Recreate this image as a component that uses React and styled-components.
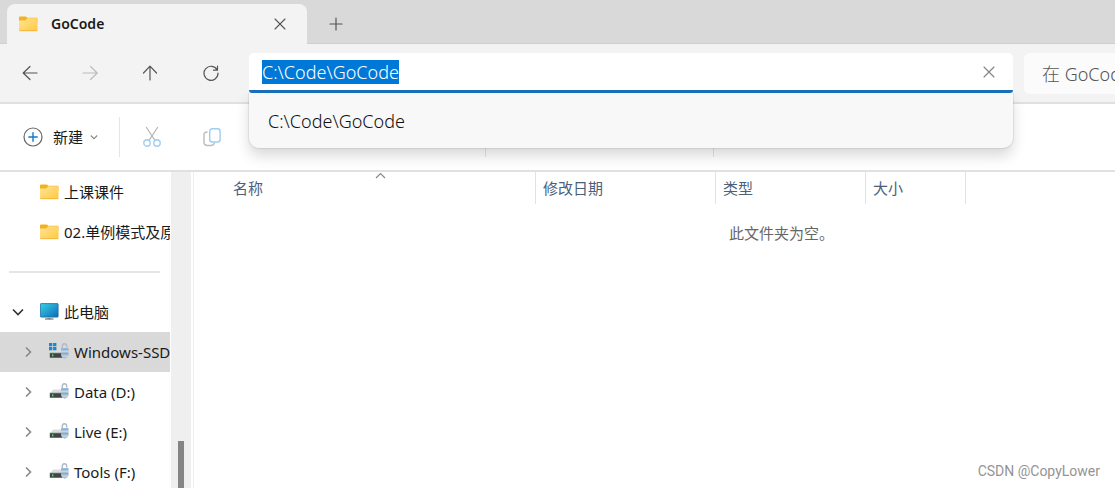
import React, { useEffect, useRef } from "react";
import styled, { createGlobalStyle } from "styled-components";

const uiFont = '"Noto Sans", "Noto Sans CJK SC", sans-serif';

const GlobalStyle = createGlobalStyle`
  *, *::before, *::after { box-sizing: border-box; }
  body {
    margin: 0;
    overflow: hidden;
    background: #fff;
    color: #1a1a1a;
    font-family: ${uiFont};
    font-size: 15px;
    line-height: 20px;
  }
  button, input { font: inherit; color: inherit; }
  button { border: 0; padding: 0; background: none; }
  svg { flex: none; }
`;

const Window = styled.div`
  display: flex;
  flex-direction: column;
  height: 100vh;
`;

const TabStrip = styled.header`
  display: flex;
  flex: none;
  height: 44px;
  padding: 4px 0 0 7px;
  background: #d9d9d9;
  box-shadow: inset 0 -1px #cfcfcf;
`;

const Tab = styled.div`
  display: flex;
  align-items: center;
  width: 300px;
  padding: 0 16px 0 12px;
  border-radius: 8px 8px 0 0;
  background: #f3f3f3;
`;

const TabTitle = styled.span`
  flex: 1;
  margin-left: 13px;
  font-size: 14px;
  font-weight: 600;
`;

const GlyphButton = styled.button`
  display: grid;
  flex: none;
  place-items: center;
  width: ${(p) => p.$width || 22}px;
  height: 32px;
  align-self: center;
  color: ${(p) => p.$color || "#555"};
`;

const NewTabButton = styled(GlyphButton)`
  margin-left: 18px;
`;

const NavBar = styled.div`
  display: flex;
  flex: none;
  align-items: flex-start;
  height: 60px;
  padding-top: 9px;
  border-bottom: 2px solid #e0e0e0;
  background: #f3f3f3;
`;

const NavButtons = styled.nav`
  display: flex;
  flex: none;
  width: 249px;
  height: 40px;
`;

const AddressArea = styled.div`
  position: relative;
  z-index: 2;
  flex: 1;
  min-width: 0;
`;

const AddressBox = styled.div`
  display: flex;
  height: 40px;
  padding: 0 13px;
  border-bottom: 3px solid #1a6fb8;
  border-radius: 5px 5px 3px 3px;
  background: #fff;
`;

const AddressInput = styled.input`
  flex: 1;
  min-width: 0;
  height: 37px;
  padding: 0;
  border: 0;
  outline: 0;
  background: none;
  font-size: 18px;
  font-weight: 300;
  &::selection { background: #0078d7; color: #fff; }
`;

const Suggestions = styled.ul`
  position: absolute;
  top: 40px;
  left: 0;
  right: 0;
  margin: 0;
  padding: 8px 0;
  border-radius: 0 0 10px 10px;
  background: #f8f8f8;
  box-shadow: 0 0 1px 1px #00000014, 0 8px 14px #00000026;
  clip-path: inset(0 -30px -30px -30px);
  list-style: none;
`;

const Suggestion = styled.button`
  display: block;
  width: 100%;
  height: 39px;
  padding-left: 19px;
  text-align: left;
  font-size: 18px;
  font-weight: 300;
  color: #111;
`;

const SearchInput = styled.input`
  flex: none;
  width: 91px;
  height: 41px;
  margin-left: 11px;
  padding: 0 0 0 18px;
  border: 0;
  border-radius: 6px 0 0 6px;
  outline: 0;
  background: #fbfbfb;
  font-size: 18px;
  font-weight: 300;
  &::placeholder { color: #555; opacity: 1; }
`;

const Toolbar = styled.div`
  display: flex;
  flex: none;
  align-items: center;
  height: 68px;
  border-bottom: 2px solid #e0e0e0;
  background: #fff;
`;

const NewButton = styled.button`
  display: flex;
  align-items: center;
  width: 119px;
  height: 40px;
  padding-left: 23px;
  span { margin: 0 7px 0 10px; }
`;

const ToolGroup = styled.div`
  display: flex;
  width: ${(p) => p.$width}px;
  height: 40px;
  padding-left: 2px;
  border-left: 1px solid #e5e5e5;
`;

const Body = styled.div`
  display: flex;
  flex: 1;
  min-height: 0;
`;

const Sidebar = styled.nav`
  flex: none;
  width: 171px;
  overflow: hidden;
`;

const TreeRow = styled.button`
  display: flex;
  align-items: center;
  gap: 5px;
  width: 170px;
  height: 40px;
  padding-left: ${(p) => p.$indent}px;
  overflow: hidden;
  white-space: nowrap;
  text-align: left;
  background: ${(p) => (p.$selected ? "#d9d9d9" : "transparent")};
`;

const Chevron = styled.svg`
  width: 12px;
  height: 12px;
  margin-right: ${(p) => p.$gap}px;
`;

const DividerRow = styled.div`
  display: flex;
  align-items: center;
  height: 40px;
  padding: 0 11px 0 9px;
  &::before { content: ""; flex: 1; height: 2px; background: #e5e5e5; }
`;

const ScrollTrack = styled.div`
  display: flex;
  flex: none;
  align-items: flex-end;
  justify-content: center;
  width: 20px;
  background: #efefef;
`;

const ScrollThumb = styled.div`
  width: 6px;
  height: 15%;
  background: #858585;
`;

const FilePane = styled.main`
  flex: 1;
  min-width: 0;
  margin-left: 2px;
  border-left: 1px solid #efefef;
`;

const FileTable = styled.table`
  border-collapse: separate;
  border-spacing: 0;
  table-layout: fixed;
  width: 772px;
`;

const HeaderCell = styled.th`
  position: relative;
  width: ${(p) => p.$width}px;
  height: 32px;
  padding: 0 0 0 ${(p) => p.$pad || 7}px;
  border-right: 1px solid #e2e2e2;
  font-weight: 400;
  text-align: left;
  color: #4c607a;
`;

const SortMark = styled.svg`
  position: absolute;
  top: 0;
  left: 50%;
  margin-left: 10px;
`;

const EmptyMessage = styled.p`
  margin: 19px 0 0 535px;
  color: #666;
`;

const Watermark = styled.div`
  position: absolute;
  right: 15px;
  bottom: 7px;
  font-family: Roboto, sans-serif;
  font-size: 14px;
  color: #949494;
`;

const Stroke = ({ size = 16, width = 1.2, children }) => (
  <svg width={size} height={size} viewBox={`0 0 ${size} ${size}`} fill="none" stroke="currentColor" strokeWidth={width} strokeLinecap="round" strokeLinejoin="round">
    {children}
  </svg>
);

const FolderIcon = () => (
  <svg width="19" height="16" viewBox="0 0 19 16">
    <defs>
      <linearGradient id="folder" x1="0" y1="0" x2="1" y2="1">
        <stop offset="0" stopColor="#ffe49a" />
        <stop offset="1" stopColor="#ffc93f" />
      </linearGradient>
    </defs>
    <path d="M0 1.500Q0 .5 1 .5h5.300q.7 0 1.200.6L8.400 1.800H17.500q1 0 1 1V7H0z" fill="#f5b21f" />
    <path d="M0 4.500h6.200L8.400 2.300H17.700q.8 0 .8.8V14q0 1-1 1H1q-1 0-1-1z" fill="url(#folder)" />
    <path d="M.3 14.700h17.900" stroke="#eeb03a" strokeWidth=".8" />
  </svg>
);

const ComputerIcon = () => (
  <svg width="19" height="18" viewBox="0 0 19 18">
    <defs>
      <linearGradient id="screen" x1="0" y1="0" x2="1" y2="1">
        <stop offset="0" stopColor="#35d3e6" />
        <stop offset="1" stopColor="#1268b8" />
      </linearGradient>
    </defs>
    <rect x=".4" y=".6" width="17.700" height="13.500" rx=".7" fill="url(#screen)" stroke="#1c6c9e" strokeWidth=".8" />
    <path d="M7.500 14.500h3.500v1.800H7.500z" fill="#9aa3aa" />
    <path d="M5 16h8.500" stroke="#6c7780" strokeWidth="1.200" />
  </svg>
);

const DriveIcon = ({ system }) => (
  <svg width="20" height="18" viewBox="0 0 20 18">
    <path d="M4 6.500h9l2 3.700H1z" fill="#dadddf" />
    <rect x=".8" y="10" width="13" height="4.700" rx=".5" fill="#424545" />
    <path d="M.8 10h13" stroke="#8c9091" strokeWidth=".7" />
    <rect x="3" y="11.400" width="1.400" height="2" fill="#3ee05a" />
    <path d="M13.300 5V3q0-2.200 2.200-2.200t2.200 2.200v1.500" fill="none" stroke="#b3bac3" strokeWidth="1.400" />
    <path d="M12 5.300h7.500v6.200q0 3-3.800 4.300-3.700-1.300-3.700-4.300z" fill="#a9c0d6" />
    <path d="M12 6h7.500M12 10.700h7.500" stroke="#65aee0" strokeWidth="1" />
    <path d="M12 8.300h7.500M13 13.200h5.500" stroke="#d4dde6" strokeWidth=".9" />
    {system && (
      <>
        <path d="M0 0h8v7.700H0z" fill="#d9d9d9" />
        <path d="M0 0h3.300v3.200H0zM4.100 0h3.300v3.200H4.100zM0 4h3.300v3.200H0zM4.100 4h3.300v3.200H4.100z" fill="#1688d4" />
      </>
    )}
  </svg>
);

const CloseGlyph = () => (
  <Stroke size={12} width={1.1}>
    <path d="M1 1L11 11M11 1L1 11" />
  </Stroke>
);

const drives = ["Windows-SSD (C:)", "Data (D:)", "Live (E:)", "Tools (F:)"];

export default function App() {
  const address = useRef(null);
  useEffect(() => {
    address.current.focus();
    address.current.select();
  }, []);

  return (
    <Window>
      <GlobalStyle />
      <TabStrip>
        <Tab>
          <FolderIcon />
          <TabTitle>GoCode</TabTitle>
          <GlyphButton aria-label="关闭标签页"><CloseGlyph /></GlyphButton>
        </Tab>
        <NewTabButton aria-label="新标签页">
          <Stroke size={14}><path d="M7 1v12M1 7h12" /></Stroke>
        </NewTabButton>
      </TabStrip>

      <NavBar>
        <NavButtons>
          <GlyphButton $width={60} aria-label="后退">
            <Stroke><path d="M15 8H1.500M8 1.500L1.200 8L8 14.500" /></Stroke>
          </GlyphButton>
          <GlyphButton $width={60} $color="#bcbcbc" aria-label="前进">
            <Stroke><path d="M1 8H14.500M8.500 1.500L15.200 8L8.500 14.500" /></Stroke>
          </GlyphButton>
          <GlyphButton $width={60} aria-label="向上">
            <Stroke><path d="M8 15V1.500M1.500 8L8 1.200L14.500 8" /></Stroke>
          </GlyphButton>
          <GlyphButton $width={61} aria-label="刷新">
            <Stroke><path d="M14.300 5.200A7 7 0 1 0 15 8M14.500 1.200V5.200H10.500" /></Stroke>
          </GlyphButton>
        </NavButtons>
        <AddressArea>
          <AddressBox>
            <AddressInput ref={address} aria-label="地址" defaultValue="C:\Code\GoCode" spellCheck={false} />
            <GlyphButton $color="#808080" aria-label="清除"><CloseGlyph /></GlyphButton>
          </AddressBox>
          <Suggestions>
            <li><Suggestion>C:\Code\GoCode</Suggestion></li>
          </Suggestions>
        </AddressArea>
        <SearchInput aria-label="搜索" placeholder="在 GoCode 中搜索" />
      </NavBar>

      <Toolbar>
        <NewButton>
          <svg width="20" height="20" viewBox="0 0 20 20" fill="none">
            <circle cx="10" cy="10" r="9" stroke="#666" strokeWidth="1.200" />
            <path d="M10 5.800v8.400M5.800 10h8.400" stroke="#1479cc" strokeWidth="1.400" strokeLinecap="round" />
          </svg>
          <span>新建</span>
          <svg width="8" height="6" viewBox="0 0 8 6" fill="none" stroke="#888" strokeWidth="1.100"><path d="M.8 1.500L4 4.700l3.200-3.200" /></svg>
        </NewButton>
        <ToolGroup $width={366}>
          <GlyphButton $width={60} aria-label="剪切">
            <svg width="18" height="22" viewBox="0 0 18 22" fill="none" strokeWidth="1.200" strokeLinecap="round">
              <path d="M3.500 1.500L12 14.500M14.500 1.500L6 14.500" stroke="#b3b3b3" />
              <circle cx="4" cy="17" r="3.200" stroke="#a0cdee" strokeWidth="1.400" />
              <circle cx="14" cy="17" r="3.200" stroke="#a0cdee" strokeWidth="1.400" />
            </svg>
          </GlyphButton>
          <GlyphButton $width={60} aria-label="复制">
            <svg width="18" height="20" viewBox="0 0 18 20" fill="none" strokeWidth="1.400">
              <path d="M4.500 5Q1 5 1 8v7q0 3.500 3.500 3.500H8q3 0 3.500-2.800" stroke="#bcbcbc" />
              <rect x="6.700" y="1.700" width="10.400" height="13.300" rx="2.500" stroke="#a0cdee" />
            </svg>
          </GlyphButton>
        </ToolGroup>
        <ToolGroup $width={228} />
        <ToolGroup $width={228} />
      </Toolbar>

      <Body>
        <Sidebar>
          <TreeRow $indent={40}><FolderIcon />上课课件</TreeRow>
          <TreeRow $indent={40}><FolderIcon />02.单例模式及原型模式</TreeRow>
          <DividerRow />
          <TreeRow $indent={12}>
            <Chevron $gap={11} viewBox="0 0 12 12" fill="none" stroke="#333" strokeWidth="1.600"><path d="M1 3.500l5 5 5-5" /></Chevron>
            <ComputerIcon />此电脑
          </TreeRow>
          {drives.map((name, i) => (
            <TreeRow key={name} $indent={22} $selected={i === 0}>
              <Chevron $gap={10} viewBox="0 0 12 12" fill="none" stroke="#888" strokeWidth="1.600"><path d="M4 1.500L8.500 6 4 10.500" /></Chevron>
              <DriveIcon system={i === 0} />{name}
            </TreeRow>
          ))}
        </Sidebar>
        <ScrollTrack><ScrollThumb /></ScrollTrack>
        <FilePane>
          <FileTable>
            <thead>
              <tr>
                <HeaderCell $width={342} $pad={39}>
                  名称
                  <SortMark width="11" height="7" viewBox="0 0 11 7" fill="none" stroke="#888" strokeWidth="1.200"><path d="M1 6l4.500-4.500L10 6" /></SortMark>
                </HeaderCell>
                <HeaderCell $width={180}>修改日期</HeaderCell>
                <HeaderCell $width={150}>类型</HeaderCell>
                <HeaderCell $width={100}>大小</HeaderCell>
              </tr>
            </thead>
          </FileTable>
          <EmptyMessage>此文件夹为空。</EmptyMessage>
        </FilePane>
      </Body>
      <Watermark>CSDN @CopyLower</Watermark>
    </Window>
  );
}
